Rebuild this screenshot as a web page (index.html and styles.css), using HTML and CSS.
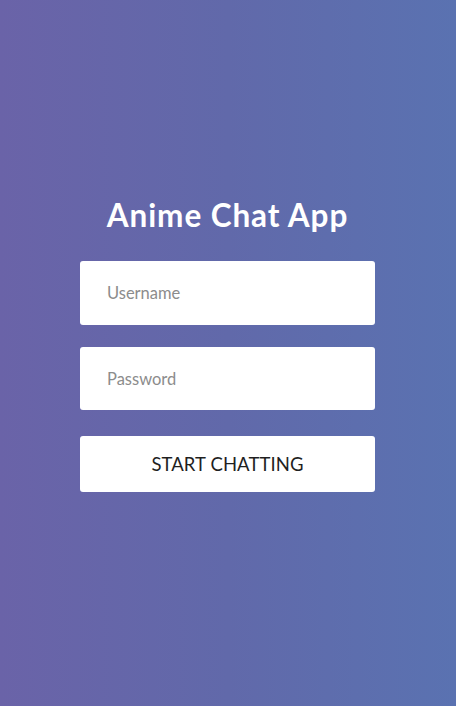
FILE: index.html
```html
<!DOCTYPE html>
<html lang="en">
<head>
<meta charset="utf-8">
<title>Anime Chat App</title>
<link rel="stylesheet" href="styles.css">
</head>
<body>
<main class="login">
  <h1 class="login__title">Anime Chat App</h1>
  <form class="login__form">
    <input class="login__field" type="text" placeholder="Username">
    <input class="login__field login__field--password" type="password" placeholder="Password">
    <button class="login__button" type="button">START CHATTING</button>
  </form>
</main>
</body>
</html>
```

FILE: styles.css
```css
html, body {
  margin: 0;
  padding: 0;
}

body {
  width: 456px;
  height: 706px;
  background: linear-gradient(to right, #6a63a8 0%, #6169aa 50%, #5a72b1 100%);
  font-family: Lato, "Open Sans", sans-serif;
  overflow: hidden;
}

.login {
  width: 295px;
  margin: 0 0 0 80px;
  padding-top: 195px;
  display: flex;
  flex-direction: column;
  align-items: stretch;
}

.login__title {
  margin: 0 0 26px;
  height: 40px;
  line-height: 40px;
  font-size: 31.5px;
  font-weight: 700;
  color: #ffffff;
  text-align: center;
  letter-spacing: 0.9px;
  white-space: nowrap;
}

.login__form {
  display: flex;
  flex-direction: column;
}

.login__field {
  box-sizing: border-box;
  height: 64px;
  margin: 0 0 22px;
  padding: 0 0 0 27px;
  border: none;
  border-radius: 3px;
  background: #ffffff;
  font-family: Lato, "Open Sans", sans-serif;
  font-size: 16.5px;
  color: #333;
  outline: none;
}

.login__field--password {
  height: 63px;
  margin-bottom: 26px;
}

.login__field::placeholder {
  color: #8c8c8c;
}

.login__button {
  box-sizing: border-box;
  height: 56px;
  border: none;
  border-radius: 3px;
  background: #ffffff;
  font-family: Lato, "Open Sans", sans-serif;
  font-size: 18.5px;
  color: #1f1f1f;
  letter-spacing: 0.1px;
  cursor: pointer;
  padding: 0;
}
```
